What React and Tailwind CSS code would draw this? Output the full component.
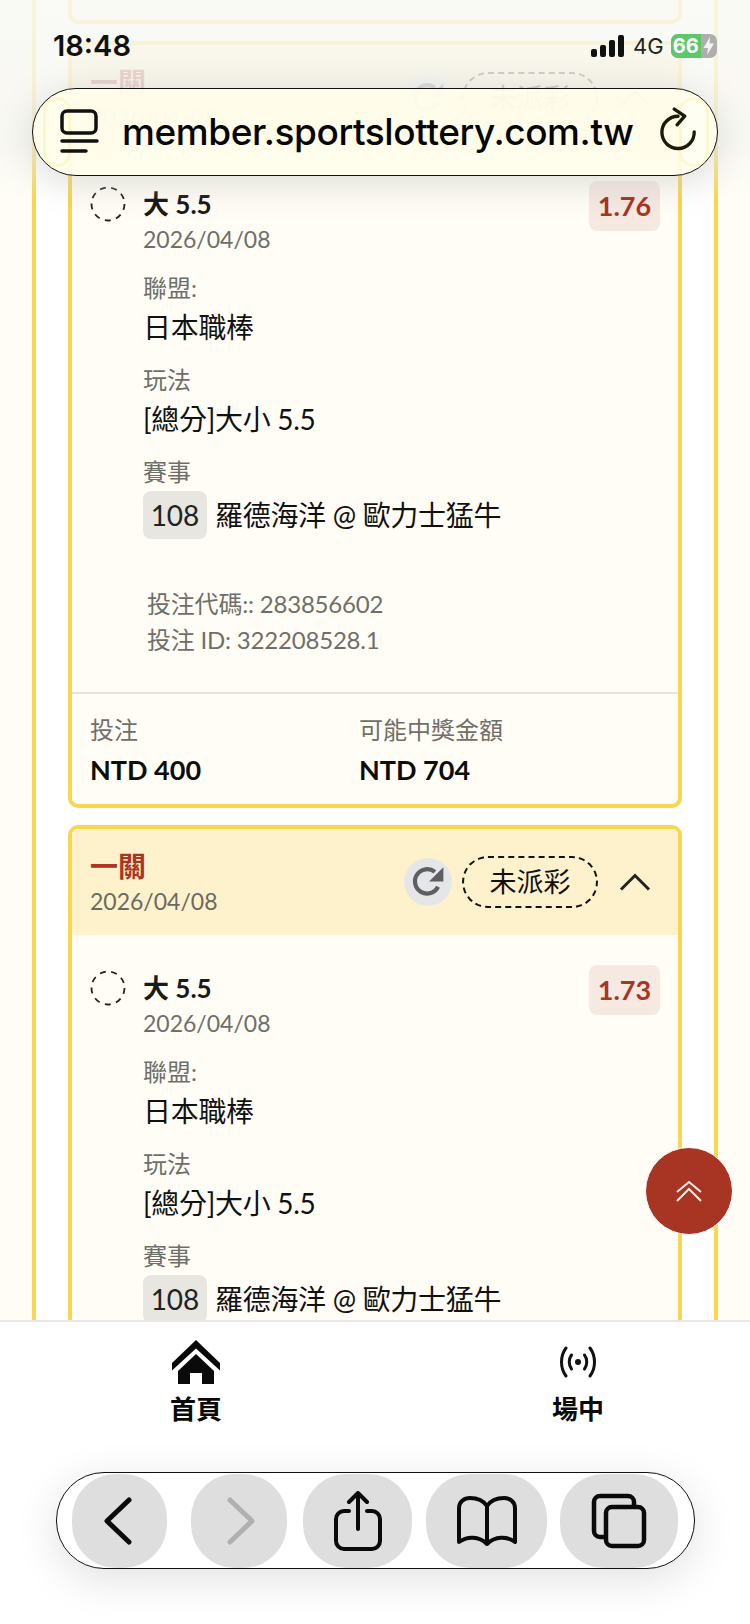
import React from 'react'

const FONT = "[font-family:Lato,'Noto_Sans_CJK_TC',sans-serif]"

const RefreshCircle = () => (
  <div className="w-[48px] h-[48px] rounded-full bg-[#e5e6e8] flex items-center justify-center">
    <svg width="36" height="36" viewBox="0 0 34 34" fill="none">
      <path d="M26.5 21.5A11.5 11.5 0 1 1 23.5 7.5" stroke="#5f5f61" strokeWidth="4" />
      <path d="M31.5 3v13.5H18z" fill="#5f5f61" />
    </svg>
  </div>
)

const DashedRadio = () => (
  <svg width="36" height="36" viewBox="0 0 36 36" fill="none" className="shrink-0">
    <circle cx="18" cy="18" r="16.5" stroke="#222" strokeWidth="1.800" strokeDasharray="6 5.500" />
  </svg>
)

const Field = ({ label, children }) => (
  <div className="mb-[16px]">
    <div className="text-[24px] leading-[34px] text-[#6f6f6a]">{label}</div>
    <div className="mt-[2px] text-[28px] leading-[40px] text-[#111] tracking-[-0.3px]">{children}</div>
  </div>
)

// partial: the card runs under the tab bar, so its lower half is never seen
const BetCard = ({ odds, partial }) => (
  <div className="border-4 border-[#f9d64f] rounded-[10px] bg-[#fffdf6] overflow-hidden">
    {/* Header */}
    <div className="h-[106px] bg-[#fdf2cc] pl-[18px] pr-[27px] flex items-center justify-between">
      <div className="pt-[2px]">
        <div className="text-[28px] leading-[36px] font-bold text-[#ab3425]">一關</div>
        <div className="text-[23px] leading-[34px] text-[#6b6a62]">2026/04/08</div>
      </div>
      <div className="flex items-center">
        <RefreshCircle />
        <div className="ml-[10px] w-[136px] h-[52px] rounded-full border-2 border-dashed border-[#111] flex items-center justify-center text-[27px] text-[#111]">
          未派彩
        </div>
        <svg width="32" height="18" viewBox="0 0 32 18" fill="none" className="ml-[21px]">
          <path d="M2 16.500L16 2.500l14 14" stroke="#222" strokeWidth="3" />
        </svg>
      </div>
    </div>

    {/* Body */}
    <div className="pl-[18px] pr-[18px] pt-[35px] relative">
      <div className="flex">
        <DashedRadio />
        <div className="ml-[17px] flex-1">
          <div className="flex justify-between items-start">
            <div>
              <div className="text-[26px] leading-[36px] font-bold text-[#1a1a1a]">大 5.5</div>
              <div className="text-[23px] leading-[34px] text-[#6f6f6a]">2026/04/08</div>
            </div>
            <div className="-mt-[5px] w-[71px] h-[50px] rounded-[8px] bg-[#f5e9e2] flex items-center justify-center text-[27px] font-bold text-[#ab3425]">
              {odds}
            </div>
          </div>
          <div className="mt-[15px]">
            <Field label="聯盟:">日本職棒</Field>
            <Field label="玩法">[總分]大小 5.5</Field>
            <div className="text-[24px] leading-[34px] text-[#6f6f6a]">賽事</div>
            <div className="mt-[2px] flex items-center">
              <div className="w-[64px] h-[48px] rounded-[8px] bg-[#e8e6e1] flex items-center justify-center text-[28px] text-[#222]">108</div>
              <div className="ml-[8px] text-[28px] text-[#111] tracking-[-0.3px]">羅德海洋 @ 歐力士猛牛</div>
            </div>
          </div>
          {!partial && (
            <div className="mt-[47px] ml-[4px] text-[24px] leading-[36px] text-[#6f6f6a] tracking-[-0.2px]">
              <div>投注代碼:: 283856602</div>
              <div>投注 ID: 322208528.1</div>
            </div>
          )}
        </div>
      </div>
    </div>

    {/* Footer */}
    {partial ? (
      <div className="h-[60px]" />
    ) : (
      <div className="mt-[34px] border-t-2 border-[#e6e4df] pl-[18px] pt-[19px] pb-[16px] flex">
        <div className="w-[269px]">
          <div className="text-[24px] leading-[34px] text-[#6f6f6a]">投注</div>
          <div className="mt-[5px] text-[27px] leading-[36px] font-bold text-[#0c0c0c]">NTD 400</div>
        </div>
        <div>
          <div className="text-[24px] leading-[34px] text-[#6f6f6a]">可能中獎金額</div>
          <div className="mt-[5px] text-[27px] leading-[36px] font-bold text-[#0c0c0c]">NTD 704</div>
        </div>
      </div>
    )}
  </div>
)

const StatusBar = () => (
  <div className="absolute top-[30px] left-0 right-0 h-[32px]">
    <div className="absolute left-[53px] top-0 text-[29px] leading-[32px] font-semibold text-[#111] [font-family:Inter,sans-serif]">18:48</div>
    <div className="absolute left-[591px] top-0 h-[32px] w-[130px] flex items-center">
      <svg width="34" height="22" viewBox="0 0 34 22" fill="#111">
        <rect x="0" y="14" width="6" height="8" rx="2" />
        <rect x="9" y="10" width="6" height="12" rx="2" />
        <rect x="18" y="5" width="6" height="17" rx="2" />
        <rect x="27" y="0" width="6" height="22" rx="2" />
      </svg>
      <div className="ml-[8px] text-[22px] text-[#222] [font-family:Inter,sans-serif]">4G</div>
      <div className="ml-[7px] relative w-[46px] h-[24px] rounded-[7px] overflow-hidden bg-[#aeaeae] flex">
        <div className="w-[30px] h-full bg-[#5cc86a] text-white text-[20px] leading-[24px] font-bold text-center [font-family:Inter,sans-serif]">66</div>
        <svg width="15" height="24" viewBox="0 0 15 24" fill="#f4f4f4">
          <path d="M9 3 2.500 14H7l-1 7 7-11.500H8.500z" />
        </svg>
      </div>
    </div>
  </div>
)

const UrlBar = () => (
  <div className="absolute left-[32px] top-[88px] w-[686px] h-[88px] rounded-[44px] border-[1.5px] border-[#111] bg-[#fffdea]/90 shadow-[0_6px_40px_rgba(0,0,0,0.13)] flex items-center overflow-hidden">
    <div className="absolute left-[10px] top-[8px] w-[28px] h-[70px] rounded-full border-[3px] border-[#fbf2b0]/50" />
    <div className="absolute right-[8px] top-[8px] w-[30px] h-[70px] rounded-full border-[3px] border-[#fbf2b0]/50 bg-white/40" />
    <svg width="40" height="46" viewBox="0 0 40 46" fill="none" className="ml-[27px] relative" stroke="#111" strokeLinecap="round">
      <rect x="2" y="2" width="34" height="22" rx="5" strokeWidth="3.500" />
      <path d="M2 32h35" strokeWidth="3.500" />
      <path d="M2 42h24" strokeWidth="3.500" />
    </svg>
    <div className="ml-[22px] relative text-[37px] font-medium text-[#050505] [font-family:Inter,sans-serif] tracking-[-0.4px] whitespace-nowrap">
      member.sportslottery.com.tw
    </div>
    <svg width="38" height="46" viewBox="0 0 40 48" fill="none" className="absolute left-[627px] top-[18px]" stroke="#1d1a05" strokeWidth="3.500" strokeLinecap="round" strokeLinejoin="round">
      <path d="M36 26A17 17 0 1 1 19 9.500" />
      <path d="M15 2l11 7.500-8 9" />
    </svg>
  </div>
)

const TabBar = () => (
  <div className="absolute left-0 right-0 top-[1320px] bottom-0 bg-white border-t-2 border-[#e8e8e6] flex items-start">
    <div className="ml-[146px] w-[100px] flex flex-col items-center">
      <svg width="48" height="44" viewBox="0 0 48 44" fill="#0a0a0a" className="mt-[18px]">
        <path d="M24 0 48 23v7.500L24 8.500 0 30.500V23z" />
        <path d="M24 14 42 31v13H30V33H18v11H6V31z" />
      </svg>
      <div className="mt-[7px] text-[26px] leading-[36px] font-bold text-[#0a0a0a]">首頁</div>
    </div>
    <div className="ml-[282px] w-[100px] flex flex-col items-center">
      <svg width="38" height="32" viewBox="0 0 38 32" fill="none" stroke="#111" strokeWidth="3" strokeLinecap="round" className="mt-[24px] mb-[6px]">
        <circle cx="19" cy="16" r="3" fill="#111" stroke="none" />
        <path d="M12.500 9c-3 4-3 10 0 14" />
        <path d="M25.500 9c3 4 3 10 0 14" />
        <path d="M7 2c-6 8-6 20 0 28" />
        <path d="M31 2c6 8 6 20 0 28" />
      </svg>
      <div className="mt-[7px] text-[26px] leading-[36px] font-bold text-[#0a0a0a]">場中</div>
    </div>
  </div>
)

const Toolbar = () => (
  <div className="absolute left-[56px] top-[1472px] w-[639px] h-[97px] rounded-[48px] border-[1.5px] border-[#111] bg-white shadow-[0_10px_44px_rgba(0,0,0,0.12)] flex items-center">
    <div className="ml-[15px] w-[95px] h-[94px] rounded-[44px] bg-[#dedede] flex items-center justify-center">
      <svg width="30" height="48" viewBox="0 0 30 48" fill="none" stroke="#0a0a0a" strokeWidth="5" strokeLinecap="round" strokeLinejoin="round" className="-ml-[4px]">
        <path d="M26 3 4 24l22 21" />
      </svg>
    </div>
    <div className="ml-[24px] w-[96px] h-[94px] rounded-[44px] bg-[#dedede] flex items-center justify-center">
      <svg width="30" height="48" viewBox="0 0 30 48" fill="none" stroke="#b0b0b0" strokeWidth="5" strokeLinecap="round" strokeLinejoin="round" className="ml-[3px]">
        <path d="M4 3l22 21L4 45" />
      </svg>
    </div>
    <div className="ml-[16px] w-[109px] h-[94px] rounded-[44px] bg-[#dedede] flex items-center justify-center">
      <svg width="48" height="60" viewBox="0 0 48 60" fill="none" stroke="#0a0a0a" strokeWidth="4" strokeLinecap="round" strokeLinejoin="round">
        <path d="M15 20H10a8 8 0 0 0-8 8v22a8 8 0 0 0 8 8h28a8 8 0 0 0 8-8V28a8 8 0 0 0-8-8h-5" />
        <path d="M24 38V3" />
        <path d="M15 11l9-9 9 9" />
      </svg>
    </div>
    <div className="ml-[14px] w-[121px] h-[94px] rounded-[44px] bg-[#dedede] flex items-center justify-center">
      <svg width="60" height="50" viewBox="0 0 60 50" fill="none" stroke="#0a0a0a" strokeWidth="4" strokeLinejoin="round">
        <path d="M30 10C26 4 20 2 13 2 7 2 2 6 2 12v34c8-6 20-6 28 2 8-8 20-8 28-2V12c0-6-5-10-11-10-7 0-13 2-17 8z" />
        <path d="M30 10v36" />
      </svg>
    </div>
    <div className="ml-[13px] w-[118px] h-[94px] rounded-[44px] bg-[#dedede] flex items-center justify-center">
      <svg width="56" height="56" viewBox="0 0 56 56" fill="none" stroke="#0a0a0a" strokeWidth="4.500" strokeLinejoin="round">
        <path d="M14 44H9a6 6 0 0 1-6-6V9a6 6 0 0 1 6-6h28a6 6 0 0 1 6 6v4" />
        <rect x="15" y="14" width="38" height="39" rx="6" />
      </svg>
    </div>
  </div>
)

const App = () => {
  return (
    <div className={`relative w-[750px] h-[1624px] overflow-hidden bg-[#fffdf6] ${FONT}`}>
      {/* Scrolled content, cut off where the tab bar starts */}
      <div className="mx-[32px] h-[1320px] overflow-hidden border-x-4 border-[#f9d64f] bg-white px-[32px]">
        <div className="h-[24px] border-4 border-t-0 border-[#f9d64f] rounded-b-[10px] bg-[#fffdf6]" />
        <div className="mt-[17px]"><BetCard odds="1.76" /></div>
        <div className="mt-[17px]"><BetCard odds="1.73" partial /></div>
      </div>

      {/* Safari chrome over the page */}
      <div className="absolute left-0 right-0 top-0 h-[200px] bg-gradient-to-b from-[#f9f9f4]/85 via-[#f7f7f2]/80 via-70% to-transparent" />
      <StatusBar />
      <UrlBar />

      {/* Scroll to top */}
      <button className="absolute left-[645px] top-[1147px] w-[88px] h-[88px] rounded-full bg-[#a83424] border border-white flex items-center justify-center">
        <svg width="26" height="21" viewBox="0 0 26 21" fill="none" stroke="#f7eee9" strokeWidth="2">
          <path d="M1 11 13 1l12 10" />
          <path d="M1 20 13 8l12 12" />
        </svg>
      </button>

      <TabBar />
      <Toolbar />
    </div>
  )
}

export default App
